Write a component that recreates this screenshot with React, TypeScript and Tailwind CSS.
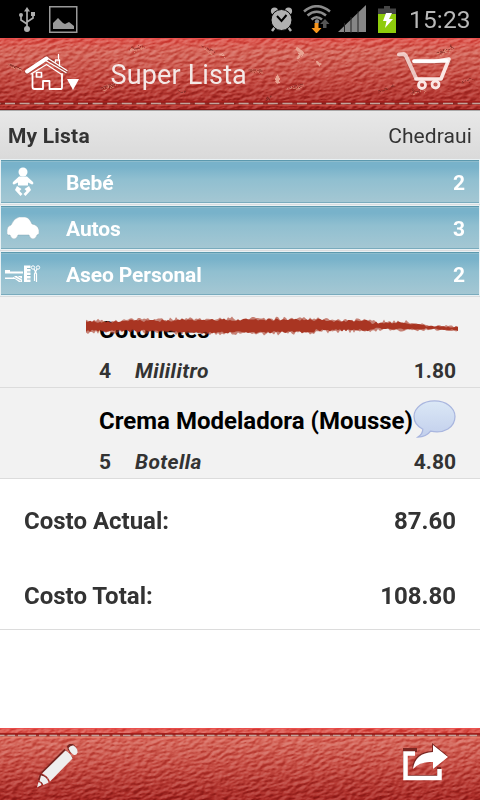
import React from 'react';

interface Category {
  name: string;
  count: number;
  icon: React.ReactNode;
}

interface Product {
  name: string;
  quantity: number;
  unit: string;
  price: string;
  done?: boolean;
  note?: boolean;
}

function StatusBar() {
  return (
    <div className="flex h-[38px] shrink-0 items-center bg-black text-[#b8b8b8]">
      <svg className="ml-[18px] h-[27px] w-[18px]" viewBox="0 0 18 27" fill="none" stroke="#adadad" strokeWidth="1.7">
        <path d="M9 22V4M9 18L3 14V9M9 16l6-4V7" />
        <path d="M6 5.500L9 1l3 4.500z" fill="#adadad" stroke="none" />
        <circle cx="9" cy="23" r="3" fill="#adadad" stroke="none" />
        <circle cx="3" cy="9" r="2" fill="#adadad" stroke="none" />
        <path d="M13 6h4v4h-4z" fill="#adadad" stroke="none" />
      </svg>
      <svg className="ml-[13px] h-[27px] w-[29px]" viewBox="0 0 29 27">
        <path d="M.75.75h27v25.5h-27z" fill="none" stroke="#999" strokeWidth="1.5" />
        <path d="M4 23v-6l5-5 5 5 2 1 4-2 5 4v3z" fill="#999" />
      </svg>
      <svg className="ml-[192px] h-[26px] w-[24px]" viewBox="0 0 24 26">
        <circle cx="4.500" cy="5" r="3.600" fill="#b0b0b0" />
        <circle cx="18.500" cy="5" r="3.600" fill="#b0b0b0" />
        <path d="M5 21l-3 4M18 21l3 4" stroke="#b0b0b0" strokeWidth="2.500" />
        <circle cx="11.500" cy="14" r="10.500" fill="#b0b0b0" stroke="#000" strokeWidth="1" />
        <path d="M7 10l4.500 5 5-6" fill="none" stroke="#000" strokeWidth="2" />
      </svg>
      <svg className="ml-[9px] h-[28px] w-[28px]" viewBox="0 0 28 28" fill="none">
        <path d="M1 6.500q12.500-10.500 26 0M4.500 10.500q9-7.500 18.500 0M8.500 14.500q5-4.500 10.500 0" stroke="#8b8b8b" strokeWidth="2.600" />
        <circle cx="14" cy="16.500" r="2.200" fill="#8b8b8b" />
        <path d="M11.500 18h4v5h3l-5 5.500-5-5.500h3z" fill="#f7961e" />
        <path d="M20 23v-4h-3l5-5 4.500 5h-3v4z" fill="#555" />
      </svg>
      <svg className="ml-[7px] h-[28px] w-[29px]" viewBox="0 0 29 28">
        <path d="M0 27L28 0v27z" fill="#868686" />
        <path d="M6.500 18v10M13 12v16M20 6v22" stroke="#222" strokeWidth="1" />
      </svg>
      <svg className="ml-[11px] h-[27px] w-[18px]" viewBox="0 0 18 27">
        <path d="M6 0h6v2.500h6V8H0V2.500h6z" fill="#454545" />
        <path d="M0 8h18v19H0z" fill="#8ecb0c" />
        <path d="M8 7h6l-3 6h4L7 22l1.500-7H5z" fill="#fff" />
      </svg>
      <span className="ml-[13px] pt-[3px] text-[24.500px] leading-none tracking-[0.15px]">15:23</span>
    </div>
  );
}

function Leather({ id, seed, worn }: { id: string; seed: number; worn?: boolean }) {
  const stitchY = worn ? 65.5 : 7.5;
  return (
    <svg className="absolute inset-0 h-[72px] w-[480px]" viewBox="0 0 480 72">
      <defs>
        <linearGradient id={`${id}-base`} x1="0" y1="0" x2="0" y2="1">
          <stop offset="0" stopColor="#dd544c" />
          <stop offset=".2" stopColor="#d4665a" />
          <stop offset=".55" stopColor="#c54c43" />
          <stop offset="1" stopColor="#a92a26" />
        </linearGradient>
        <filter id={`${id}-grain`} x="0" y="0" width="1" height="1" colorInterpolationFilters="sRGB">
          <feTurbulence type="fractalNoise" baseFrequency=".14 .32" numOctaves="3" seed={seed} />
          <feColorMatrix values="0 0 0 0 .5 0 0 0 0 .5 0 0 0 0 .5 1 0 0 0 0" />
          <feDiffuseLighting surfaceScale="2.6" diffuseConstant=".95" lightingColor="#fff">
            <feDistantLight azimuth="250" elevation="34" />
          </feDiffuseLighting>
        </filter>
        <filter id={`${id}-rough`}>
          <feTurbulence baseFrequency=".2" numOctaves="2" seed="4" />
          <feDisplacementMap in="SourceGraphic" scale="5" />
        </filter>
      </defs>
      <rect width="480" height="72" fill={`url(#${id}-base)`} />
      <g style={{ mixBlendMode: 'soft-light' }} opacity=".6">
        <rect x="-40" y="-90" width="580" height="260" filter={`url(#${id}-grain)`} transform="rotate(-14 240 36)" />
      </g>
      {worn && (
        <g filter={`url(#${id}-rough)`} fill="none" strokeLinecap="round">
          <path d="M8 25l12 5M100 49l14-5M148 36l10-3M128 10l14-3M202 8l10 4M248 31h12M286 49l16-4M377 52l16-5M410 53l14-4M270 57l-7 7M436 14l16-6M460 43l12-3M176 54l8-3" stroke="#70251f" strokeWidth="1.200" opacity=".7" />
          <path d="M9 27l12 5M101 51l14-5M129 12l14-3M204 11l8 5M249 33h12M287 51l16-4M410 55l14-4M437 16l12-6" stroke="#e3a58b" strokeWidth="1" opacity=".7" />
          <path d="M295 7l9 7-5 3-2 5-2-4 2-4zM314 21l7 4-3 2zM274 43l3-7 3 4-3 5zM217 16l5-2 1 3zM325 24l4 3z" fill="#e8a493" />
        </g>
      )}
      <path d="M0 .5h480" stroke="#f14a4c" opacity=".7" />
      <path d={`M0 ${stitchY - 1.5}h480`} stroke="#a51f1c" strokeWidth="2" />
      <path d={`M0 ${stitchY}h480`} stroke="#5c2521" strokeWidth="2" opacity=".4" />
      <path
        d={`M0 ${stitchY}h480`}
        stroke="#c3a29a"
        strokeWidth="1.600"
        strokeDasharray={worn ? '10 4.6' : '7.500 3'}
        strokeDashoffset={worn ? 9.6 : 3}
      />
      {worn ? (
        <path d="M0 67.500h480" stroke="#df4f43" strokeWidth="1" opacity=".5" />
      ) : (
        <path d="M0 9.500h480" stroke="#ed8a74" strokeWidth="1.300" opacity=".6" />
      )}
      {worn && <path d="M0 71.500h480" stroke="#851917" />}
    </svg>
  );
}

function Header() {
  return (
    <header className="relative flex h-[72px] shrink-0 overflow-hidden">
      <Leather id="top" seed={7} worn />
      <div className="relative flex w-full">
        <svg className="ml-[24px] mt-[14px] h-[40px] w-[58px]" viewBox="0 0 58 40" fill="none" stroke="#fff" strokeLinejoin="round" strokeLinecap="round">
          <path d="M3 20L23 6l19 14" stroke="#7c251f" strokeWidth="5" opacity=".4" />
          <path d="M3 19.500L22.500 6.500" strokeWidth="4" />
          <path d="M22.500 5.500L43 18.500M22.500 9L42 20.500M22.500 12.500L37 22M22.500 12.500L7 22" strokeWidth="1.400" />
          <path d="M31.500 10V8h4v6M34.500 2.500v4" strokeWidth="1.300" />
          <path d="M8.500 22v13q0 2 2 2h8.500v-8h6.500v8H37q1 0 1-2V22" strokeWidth="1.800" />
          <path d="M12.500 20.500h5v4.500h-5z" strokeWidth="1.700" />
          <path d="M43 27h12l-6 11z" fill="#fff" stroke="none" />
        </svg>
        <h1 className="ml-[28.500px] mt-[20px] text-[27px] leading-[34px] font-normal tracking-[0.150px] text-[#f4e9e7]">Super Lista</h1>
        <svg className="ml-auto mr-[27px] mt-[13px] h-[42px] w-[56px]" viewBox="0 0 56 42" fill="none" stroke="#fbe8e5" strokeLinejoin="round" strokeLinecap="round">
          <path d="M3 5h5l2 4 10 20M17 11h36" stroke="#73201b" strokeWidth="4" opacity=".3" />
          <path d="M2 3.500l5-.5 2 2 10 22" strokeWidth="4" opacity=".8" />
          <path d="M17 10.500h20L52 8l-8 20H19" strokeWidth="3.600" />
          <path d="M17 10h33" stroke="#fff" strokeWidth="3.500" />
          <circle cx="25" cy="34" r="3.500" strokeWidth="2.800" />
          <circle cx="38.500" cy="33.500" r="3.500" strokeWidth="2.800" />
        </svg>
      </div>
    </header>
  );
}

const BabyIcon = () => (
  <svg className="h-[30px] w-[22px]" viewBox="0 0 22 30" fill="#fff">
    <circle cx="11" cy="5" r="4.500" />
    <path d="M7 9.500h8l6 5.500q1 2-1 2.500l-4-2v3H6v-3l-4 2q-2-.5-1-2.500z" />
    <path d="M5 19l4.500 3-2 2 3 3-2 2L3 23zM17 19l-4.500 3 2 2-3 3 2 2 5.500-6z" />
  </svg>
);

const CarIcon = () => (
  <svg className="h-[22px] w-[32px]" viewBox="0 0 32 22">
    <path d="M0 17v-4q0-4 4-5 3-7 8-8h6q4 0 7 7 6 1 7 6v4l-2 1q-1 4-4 4t-4-4H11q-1 4-4 4t-4-4H1z" fill="#fff" stroke="#779ba6" strokeWidth=".4" />
  </svg>
);

const CareIcon = () => (
  <svg className="h-[18px] w-[36px]" viewBox="0 0 36 18" fill="none" stroke="#fff">
    <path d="M0 7.500h18M0 6h5" strokeWidth="1.800" />
    <path d="M0 12.500h8l2-1.500h7v6h-3l-4-3H0z" fill="#fff" stroke="none" />
    <path d="M9 12l7 4M12 11l5 3" stroke="#8eb9c8" strokeWidth=".7" />
    <path d="M19 .5h6.500V17H19z" fill="#fff" stroke="none" />
    <path d="M22 3.500h4M22 7h4M22 10.500h4M22 14h4" stroke="#91bac8" strokeWidth="1.200" />
    <circle cx="28" cy="2.500" r="1.700" />
    <circle cx="33" cy="2.500" r="1.700" />
    <path d="M29 4l2.500 5v8M32 4l-2.500 5v7" strokeWidth="1.200" />
  </svg>
);

const categories: Category[] = [
  { name: 'Bebé', count: 2, icon: <BabyIcon /> },
  { name: 'Autos', count: 3, icon: <CarIcon /> },
  { name: 'Aseo Personal', count: 2, icon: <CareIcon /> },
];

const products: Product[] = [
  { name: 'Cotonetes', quantity: 4, unit: 'Mililitro', price: '1.80', done: true },
  { name: 'Crema Modeladora (Mousse)', quantity: 5, unit: 'Botella', price: '4.80', note: true },
];

function CategoryRow({ category }: { category: Category }) {
  return (
    <div className="h-[46px] border-b border-[#d9dcde] bg-[#e9f1f4] px-px pt-px pb-px">
      <div className="flex h-[43px] items-center border-t border-b border-t-[#5c99ae] border-b-[#79abbd] bg-linear-to-b from-[#78b2ca] from-15% via-[#90bfd0] via-45% to-[#a4c7d3] pr-[14px] text-[21px] font-bold text-white shadow-[inset_0_1px_0_#8dbccd]">
        <div className="flex w-[43px] justify-center">{category.icon}</div>
        <span className="ml-[22px] pt-[4px] tracking-[-0.1px]">{category.name}</span>
        <span className="ml-auto pt-[4px]">{category.count}</span>
      </div>
    </div>
  );
}

// Cheap repeatable noise so the bristles stay the same between renders
function noise(n: number) {
  const v = Math.sin(n * 127.1) * 43758.5453;
  return v - Math.floor(v);
}

// Brush stroke outline: jagged around a centre line and tapering off to the right
function brushPath(reach: number, seed: number) {
  const top: string[] = [];
  const bottom: string[] = [];
  for (let x = 0; x <= 372; x += 2) {
    const above = x < 40 ? 3 : x < 90 ? 4 : x < 240 ? 5 : x < 285 ? 4 : x < 340 ? 2 : 0.7;
    const below = x < 90 ? 3.5 : x < 230 ? 5 : x < 285 ? 3 : x < 340 ? 1.5 : 0.7;
    const drift = x > 310 ? (x - 310) / 22 : 0;
    const amount = x > 320 ? reach * 0.6 : reach;
    top.push(`${x},${(10 - above - noise(x + seed) * amount + drift).toFixed(1)}`);
    bottom.unshift(`${x},${(10 + below + noise(x + seed + 0.5) * amount + drift).toFixed(1)}`);
  }
  return `M${top.join('L')}L${bottom.join('L')}Z`;
}

function ProductRow({ product }: { product: Product }) {
  return (
    <div className="relative h-[91px] border-b border-[#dcdcdc] bg-[#f2f2f2] pl-[99px] pr-[24px]">
      <div className="flex h-[62px] items-center pt-[4px]">
        <span className="whitespace-nowrap text-[24px] font-bold tracking-[0.01px] text-black">{product.name}</span>
        {product.note && (
          <svg className="-mt-[3px] h-[39px] w-[43px] shrink-0" viewBox="0 0 44 40">
            <defs>
              <linearGradient id="bubble" x1="0" y1="0" x2="0" y2="1">
                <stop offset="0" stopColor="#dbe8f6" />
                <stop offset="1" stopColor="#c2cfec" />
              </linearGradient>
            </defs>
            <path d="M22 1C10 1 1 8 1 17c0 6 3 10 9 13 0 3-2 6-5 8 6 0 10-2 13-6 14 3 25-4 25-15C43 8 34 1 22 1z" fill="url(#bubble)" stroke="#a9b6df" strokeWidth="1.300" />
          </svg>
        )}
      </div>
      <div className="flex h-[26px] items-center text-[21px] font-bold text-[#333]">
        <span className="w-[36px]">{product.quantity}</span>
        <span className="italic tracking-[0.4px]">{product.unit}</span>
        <span className="ml-auto">{product.price}</span>
      </div>
      {product.done && (
        <svg className="absolute left-[86px] top-[19px] h-[20px] w-[373px] blur-[0.6px]" viewBox="0 0 373 20">
          <path d={brushPath(4.5, 3)} fill="#a93522" opacity=".6" />
          <path d={brushPath(2.5, 11)} fill="#a93522" />
        </svg>
      )}
    </div>
  );
}

function TotalRow({ label, value }: { label: string; value: string }) {
  return (
    <div className="flex h-[75px] items-center justify-between text-[24px] font-bold text-[#333]">
      <span>{label}</span>
      <span>{value}</span>
    </div>
  );
}

function Footer() {
  return (
    <footer className="relative mt-auto h-[72px] shrink-0 overflow-hidden">
      <Leather id="bottom" seed={12} />
      <div className="relative flex items-start justify-between pl-[36px] pr-[31px] pt-[15px]">
        <svg className="mt-[1px] h-[44px] w-[43px]" viewBox="0 0 43 44" fill="#eee">
          <g fill="#752520" transform="translate(-1 -1.2)">
            <path d="M29.500 6l8 8.500L14 37.500q-2-6-8-8z" />
            <path d="M32 3.500q2-3 5.500-2.500 4.500 3 4 7-1 3-4 3-4.500-2-5.500-7.500z" />
            <path d="M5 31q6.500 1 8 7.500l-6 3Q6 38 3 37z" />
          </g>
          <path d="M29.500 6.500q5 2.500 7 8L14 37.500q-2.500-6-8-8z" />
          <path d="M32.500 4q2-3 5-2.500 4.500 3 4 7-1 3-3.500 2.500-4-2-5.500-7z" />
          <path d="M5 31.500q6 1 7.500 7l-5 2.500Q6.500 38 3.500 37z" />
          <path d="M2.500 38q2.500.5 3 3L1 43.500z" />
        </svg>
        <svg className="h-[39px] w-[47px]" viewBox="0 0 47 39">
          <path d="M14 8H2v27h34V25" fill="none" stroke="#792722" strokeWidth="4" transform="translate(1 -1)" />
          <path d="M13 10.500H3.500V35h34V26" fill="none" stroke="#fff" strokeWidth="4.500" />
          <path d="M30 0l16 13-15 13v-7Q17 17 10 25 12 9 30 8z" fill="#792722" />
          <path d="M31 2l15 12-15 12v-7Q18 18 11 26 13 10 31 9z" fill="#fff" />
        </svg>
      </div>
    </footer>
  );
}

export default function App() {
  return (
    <div className="flex h-[800px] w-[480px] flex-col overflow-hidden bg-white font-[Roboto,sans-serif]">
      <StatusBar />
      <Header />
      <div className="flex h-[49px] shrink-0 items-center justify-between border-t border-[#aaa] bg-linear-to-b from-[#e8e8e8] to-[#dadada] px-2 pt-[4px] text-[21px] text-[#333]">
        <span className="font-bold tracking-[0.2px]">My Lista</span>
        <span className="tracking-[0.1px]">Chedraui</span>
      </div>
      <main>
        {categories.map(category => (
          <CategoryRow key={category.name} category={category} />
        ))}
        {products.map(product => (
          <ProductRow key={product.name} product={product} />
        ))}
        <section className="h-[151px] border-b border-[#dcdcdc] px-[24px] pt-[4px]">
          <TotalRow label="Costo Actual:" value="87.60" />
          <TotalRow label="Costo Total:" value="108.80" />
        </section>
      </main>
      <Footer />
    </div>
  );
}
